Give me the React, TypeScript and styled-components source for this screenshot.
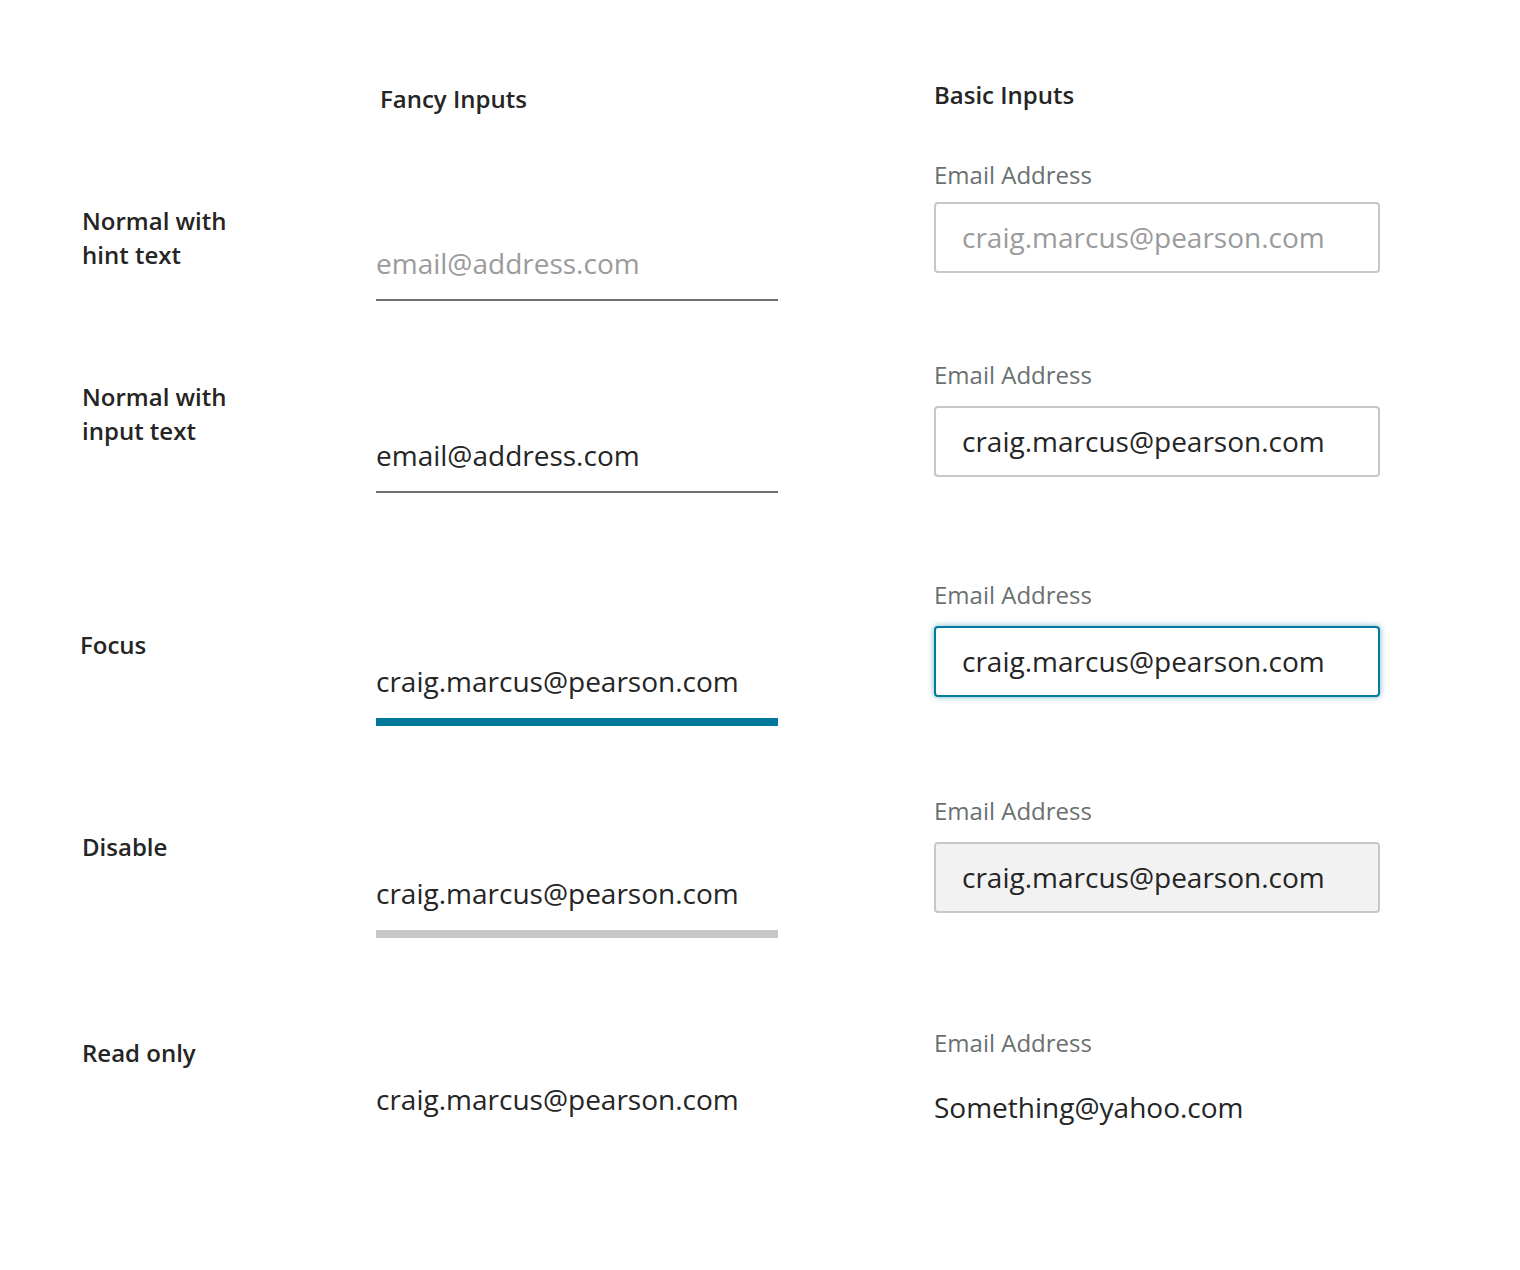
import styled, { createGlobalStyle } from "styled-components";

const GlobalStyle = createGlobalStyle`
	body {
		margin: 0;
		background: #ffffff;
		font-family: "Open Sans", "Noto Sans", sans-serif;
		color: #252525;
	}
`;

const Page = styled.div`
	width: 1520px;
	min-height: 1270px;
	padding: 80px 0 0 82px;
	box-sizing: border-box;
`;

const Row = styled.div<{ $height: number }>`
	display: grid;
	grid-template-columns: 294px 558px 446px;
	height: ${(p) => p.$height}px;
`;

const Cell = styled.div<{ $top?: number; $left?: number }>`
	padding-top: ${(p) => p.$top ?? 0}px;
	margin-left: ${(p) => p.$left ?? 0}px;
`;

const Heading = styled.h2`
	margin: 0;
	font-size: 24px;
	font-weight: 600;
	line-height: 30px;
	color: #252525;
`;

const StateLabel = styled.div`
	font-size: 24px;
	font-weight: 600;
	line-height: 34px;
	color: #252525;
`;

const FancyField = styled.div`
	width: 402px;
`;

const FancyInput = styled.input`
	display: block;
	box-sizing: border-box;
	width: 100%;
	height: 40px;
	padding: 0;
	margin: 0;
	border: 0;
	outline: none;
	background: transparent;
	font-family: inherit;
	font-size: 28px;
	line-height: 40px;
	color: #252525;
	-webkit-text-fill-color: #252525;

	&::placeholder {
		color: #9b9b9b;
		-webkit-text-fill-color: #9b9b9b;
	}
`;

const Underline = styled.div<{ $thickness: number; $color: string; $gap: number }>`
	margin-top: ${(p) => p.$gap}px;
	height: ${(p) => p.$thickness}px;
	background: ${(p) => p.$color};
`;

const FieldLabel = styled.label`
	display: block;
	font-size: 24px;
	line-height: 30px;
	color: #6a7070;
`;

type BoxVariant = "normal" | "focus" | "disabled";

const BasicInput = styled.input<{ $variant: BoxVariant; $gap: number }>`
	display: block;
	box-sizing: border-box;
	width: 446px;
	height: 71px;
	margin: ${(p) => p.$gap}px 0 0;
	padding: 0 26px 2px;
	border: 2px solid
		${(p) => (p.$variant === "focus" ? "#047a9c" : "#c7c7c7")};
	border-radius: 4px;
	outline: none;
	background: ${(p) => (p.$variant === "disabled" ? "#f2f2f2" : "#ffffff")};
	box-shadow: ${(p) =>
		p.$variant === "focus" ? "0 0 6px rgba(4, 122, 156, 0.55)" : "none"};
	font-family: inherit;
	font-size: 28px;
	color: #252525;
	-webkit-text-fill-color: #252525;

	&::placeholder {
		color: #9b9b9b;
		-webkit-text-fill-color: #9b9b9b;
	}
`;

const ReadOnlyValue = styled.div<{ $gap: number }>`
	margin-top: ${(p) => p.$gap}px;
	font-size: 28px;
	line-height: 40px;
	color: #252525;
`;

const EMAIL = "craig.marcus@pearson.com";

export default function App() {
	return (
		<>
			<GlobalStyle />
			<Page>
				<Row $height={80}>
					<Cell />
					<Cell $top={4} $left={4}>
						<Heading>Fancy Inputs</Heading>
					</Cell>
					<Cell>
						<Heading>Basic Inputs</Heading>
					</Cell>
				</Row>

				<Row $height={200}>
					<Cell $top={44}>
						<StateLabel>
							Normal with
							<br />
							hint text
						</StateLabel>
					</Cell>
					<Cell $top={83}>
						<FancyField>
							<FancyInput readOnly placeholder="email@address.com" />
							<Underline $thickness={2} $color="#6f6f6f" $gap={16} />
						</FancyField>
					</Cell>
					<Cell>
						<FieldLabel>Email Address</FieldLabel>
						<BasicInput readOnly $variant="normal" $gap={12} placeholder={EMAIL} />
					</Cell>
				</Row>

				<Row $height={220}>
					<Cell $top={20}>
						<StateLabel>
							Normal with
							<br />
							input text
						</StateLabel>
					</Cell>
					<Cell $top={75}>
						<FancyField>
							<FancyInput readOnly value="email@address.com" />
							<Underline $thickness={2} $color="#6f6f6f" $gap={16} />
						</FancyField>
					</Cell>
					<Cell>
						<FieldLabel>Email Address</FieldLabel>
						<BasicInput readOnly $variant="normal" $gap={16} value={EMAIL} />
					</Cell>
				</Row>

				<Row $height={216}>
					<Cell $top={48} $left={-2}>
						<StateLabel>Focus</StateLabel>
					</Cell>
					<Cell $top={81}>
						<FancyField>
							<FancyInput readOnly value={EMAIL} />
							<Underline $thickness={8} $color="#007a9c" $gap={17} />
						</FancyField>
					</Cell>
					<Cell>
						<FieldLabel>Email Address</FieldLabel>
						<BasicInput readOnly $variant="focus" $gap={16} value={EMAIL} />
					</Cell>
				</Row>

				<Row $height={232}>
					<Cell $top={34}>
						<StateLabel>Disable</StateLabel>
					</Cell>
					<Cell $top={77}>
						<FancyField>
							<FancyInput disabled value={EMAIL} />
							<Underline $thickness={8} $color="#c7c7c7" $gap={17} />
						</FancyField>
					</Cell>
					<Cell>
						<FieldLabel>Email Address</FieldLabel>
						<BasicInput disabled $variant="disabled" $gap={16} value={EMAIL} />
					</Cell>
				</Row>

				<Row $height={160}>
					<Cell $top={8}>
						<StateLabel>Read only</StateLabel>
					</Cell>
					<Cell $top={51}>
						<FancyField>
							<FancyInput readOnly value={EMAIL} />
						</FancyField>
					</Cell>
					<Cell>
						<FieldLabel>Email Address</FieldLabel>
						<ReadOnlyValue $gap={29}>Something@yahoo.com</ReadOnlyValue>
					</Cell>
				</Row>
			</Page>
		</>
	);
}
